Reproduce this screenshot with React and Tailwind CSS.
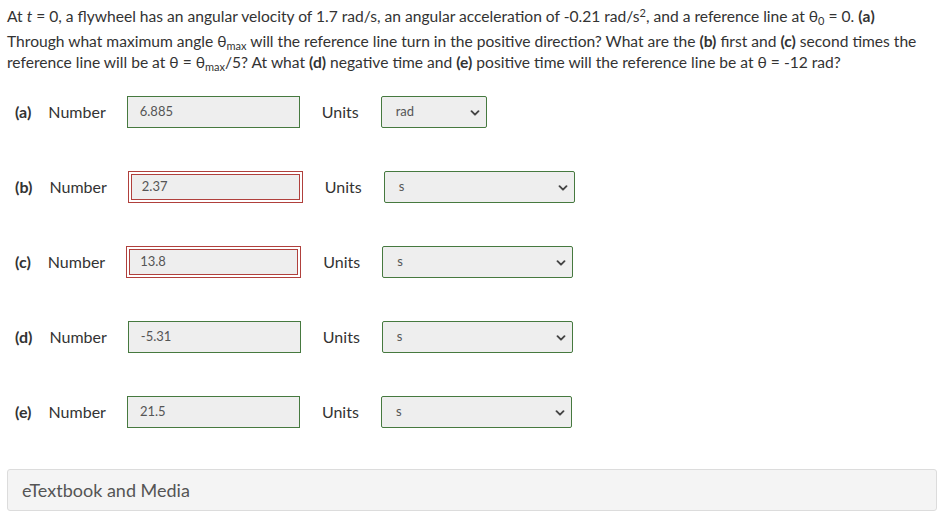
import React from "react";

const rows = [
  { id: "a", value: "6.885", unit: "rad", wrong: false, narrow: true },
  { id: "b", value: "2.37", unit: "s", wrong: true },
  { id: "c", value: "13.8", unit: "s", wrong: true },
  { id: "d", value: "-5.31", unit: "s", wrong: false },
  { id: "e", value: "21.5", unit: "s", wrong: false },
];

const Chevron = () => (
  <svg className="h-[10px] w-[10px]" viewBox="0 0 10 10" fill="none">
    <path d="M1.5 3.2 5 6.7 8.5 3.2" stroke="#444" strokeWidth="1.9" strokeLinecap="round" strokeLinejoin="round" />
  </svg>
);

const Sub = ({ children }) => <sub className="text-[11px] leading-none">{children}</sub>;

const AnswerRow = ({ row }) => (
  <div className="flex h-[32px] items-center text-[16px] text-[#333]">
    <span className="ml-[15px] font-bold">({row.id})</span>
    <span className="ml-[17px]">Number</span>
    {row.wrong ? (
      <div className="ml-[21px] border border-[#b0403c] bg-white p-[2px]">
        <div className="flex h-[26px] w-[169px] items-center border border-[#b0403c] bg-[#eeeeee] pl-[10px] text-[13px] text-[#555]">
          {row.value}
        </div>
      </div>
    ) : (
      <div className="ml-[21px] flex h-[32px] w-[173px] items-center border border-[#46793f] bg-[#eeeeee] pl-[12px] text-[13px] text-[#555]">
        {row.value}
      </div>
    )}
    <span className="ml-[22px]">Units</span>
    <div
      className={`relative ml-[22px] flex h-[32px] items-center rounded-[2px] border border-[#46793f] bg-[#eeeeee] pl-[14px] text-[13px] text-[#555] ${
        row.narrow ? "w-[106px]" : "w-[191px]"
      }`}
    >
      {row.unit}
      <span className="absolute right-[6px] top-[11px]">
        <Chevron />
      </span>
    </div>
  </div>
);

export default function App() {
  return (
    <div className="min-h-[518px] w-[944px] bg-white pt-[6px] font-['Lato',sans-serif] text-[#333]">
      <p className="whitespace-nowrap px-[7px] text-[15.6px] leading-[21px]">
        <span className="block">
          At <i>t</i> = 0, a flywheel has an angular velocity of 1.7 rad/s, an angular acceleration of -0.21 rad/s
          <sup className="text-[11px] leading-none">2</sup>, and a reference line at θ<Sub>0</Sub> = 0. <b>(a)</b>
        </span>
        <span className="block pt-[4px]">
          Through what maximum angle θ<Sub>max</Sub> will the reference line turn in the positive direction? What are
          the <b>(b)</b> first and <b>(c)</b> second times the
        </span>
        <span className="block">
          reference line will be at θ = θ<Sub>max</Sub>/5? At what <b>(d)</b> negative time and <b>(e)</b> positive
          time will the reference line be at θ = -12 rad?
        </span>
      </p>

      <div className="mt-[23px] flex flex-col gap-[43px]">
        {rows.map((row) => (
          <AnswerRow key={row.id} row={row} />
        ))}
      </div>

      <div className="mx-[7px] mt-[41px] flex h-[42px] w-[930px] items-center rounded-[3px] border border-[#dcdcdc] bg-[#f4f4f4] pl-[14px] text-[18px] text-[#555]">
        eTextbook and Media
      </div>
    </div>
  );
}
